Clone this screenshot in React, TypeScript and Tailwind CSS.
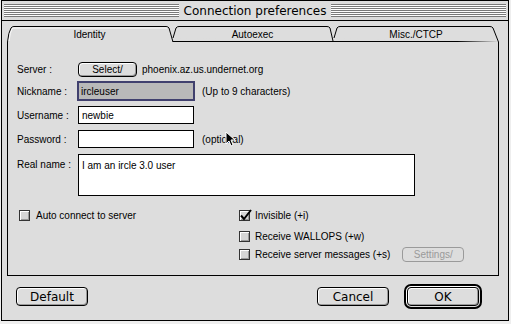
const geneva = { fontFamily: '"Liberation Sans", Arial, sans-serif' };
const chicago = { fontFamily: '"DejaVu Sans", Verdana, sans-serif' };

function Stripes({ className = "" }: { className?: string }) {
  return (
    <div
      className={`h-[13px] bg-[repeating-linear-gradient(to_bottom,#7a7a7a_0px,#7a7a7a_1px,#ffffff_1px,#ffffff_2px)] ${className}`}
    />
  );
}

function Button({ label, w, disabled = false }: { label: string; w: string; disabled?: boolean }) {
  return (
    <div
      className={`${w} h-full flex items-center justify-center rounded-[4px] border bg-[#dddddd] ${
        disabled
          ? "border-[#9a9a9a] text-[#9a9a9a]"
          : "border-black text-black shadow-[inset_1px_1px_0_#ffffff,inset_-1px_-1px_0_#999999]"
      }`}
    >
      {label}
    </div>
  );
}

function Checkbox({ checked = false }: { checked?: boolean }) {
  return (
    <div className="relative w-[11px] h-[11px] shrink-0 border border-[#333] bg-[#d6d6d6] shadow-[inset_1px_1px_0_#ffffff,inset_-1px_-1px_0_#999999]">
      {checked && (
        <svg className="absolute -left-px -top-[2px]" width="14" height="13" viewBox="0 0 14 13">
          <path d="M2 6.5 L5 10 L12 1" fill="none" stroke="#000" strokeWidth="2" />
        </svg>
      )}
    </div>
  );
}

function Field({ value, w = "w-[116px]" }: { value: string; w?: string }) {
  return (
    <div className={`${w} h-[18px] border border-black bg-white flex items-center pl-[3px] text-[10px]`}>
      {value}
    </div>
  );
}

function Tabs() {
  return (
    <div className="relative h-[16px] ml-[5px] w-[492px]">
      <svg className="absolute inset-0" width="492" height="16" viewBox="0 0 492 16">
        <g fill="none" stroke="#000" strokeWidth="1">
          {/* inactive tabs */}
          <path d="M165 15.5 H491" />
          <path d="M166 12 L169 2 Q170 0.5 172 0.5 H320 Q322 0.5 323 2 L326 15" fill="#dddddd" />
          <path d="M327 12 L330 2 Q331 0.5 333 0.5 H483 Q485 0.5 486 2 L491.5 16" fill="#dddddd" />
          {/* active tab */}
          <path d="M0.5 16 Q1.5 6 4 2 Q5 0.5 7 0.5 H159 Q161 0.5 162 2 L166 16" fill="#dddddd" />
          <path d="M166 15.5 H491" stroke="#000" strokeDasharray="0" opacity="0" />
        </g>
        <path d="M2 15 Q3 6 5 3 L6 2 H160" fill="none" stroke="#ffffff" strokeWidth="1" opacity="0.9" />
      </svg>
      <div className="relative flex h-full text-[10px] text-black" style={geneva}>
        <div className="w-[165px] flex items-center justify-center pt-[1px]">Identity</div>
        <div className="w-[161px] flex items-center justify-center pt-[1px]">Autoexec</div>
        <div className="w-[166px] flex items-center justify-center pt-[1px]">Misc./CTCP</div>
      </div>
    </div>
  );
}

export default function App() {
  return (
    <div className="relative w-[511px] h-[324px] bg-[#eeeeee] overflow-hidden text-black">
      <div className="ml-px w-[508px] h-[321px] border border-black bg-[#dddddd] flex flex-col">
        {/* title bar */}
        <div className="h-[20px] shrink-0 flex items-center px-[2px] gap-[5px] border-b border-black">
          <Stripes className="flex-1" />
          <span className="text-[12px] leading-none" style={chicago}>
            Connection preferences
          </span>
          <Stripes className="flex-1" />
        </div>

        <div className="mt-[5px]">
          <Tabs />
        </div>

        {/* panel */}
        <div
          className="ml-[5px] w-[492px] h-[234px] border-l border-r border-b border-black pl-[9px] pt-[20px] text-[10px] flex flex-col"
          style={geneva}
        >
          <div className="h-[15px] flex items-center">
            <span className="w-[61px]">Server :</span>
            <div className="h-[15px]" style={chicago}>
              <div className="h-full text-[10px]" style={geneva}>
                <Button label="Select/" w="w-[59px]" />
              </div>
            </div>
            <span className="ml-[5px]">phoenix.az.us.undernet.org</span>
          </div>

          <div className="mt-[4px] h-[20px] flex items-center">
            <span className="w-[60px]">Nickname :</span>
            <div className="w-[118px] h-[20px] border-2 border-[#40406e] bg-[#b9b9b9] flex items-center pl-[2px]">
              ircleuser
            </div>
            <span className="ml-[7px]">(Up to 9 characters)</span>
          </div>

          <div className="mt-[5px] h-[18px] flex items-center">
            <span className="w-[61px]">Username :</span>
            <Field value="newbie" />
          </div>

          <div className="mt-[6px] h-[18px] flex items-center">
            <span className="w-[61px]">Password :</span>
            <Field value="" />
            <span className="ml-[8px]">(optional)</span>
          </div>

          <div className="mt-[6px] h-[42px] flex items-start">
            <span className="w-[61px] pt-[3px]">Real name :</span>
            <div className="w-[337px] h-[42px] border border-black bg-white pl-[3px] pt-[3px]">
              I am an ircle 3.0 user
            </div>
          </div>

          <div className="mt-[13px] flex">
            <div className="w-[222px] pl-[2px] h-[12px] flex items-center gap-[6px]">
              <Checkbox />
              <span>Auto connect to server</span>
            </div>
            <div className="flex flex-col">
              <div className="h-[12px] flex items-center gap-[5px]">
                <Checkbox checked />
                <span>Invisible (+i)</span>
              </div>
              <div className="mt-[9px] h-[12px] flex items-center gap-[5px]">
                <Checkbox />
                <span>Receive WALLOPS (+w)</span>
              </div>
              <div className="mt-[5px] h-[15px] flex items-center">
                <Checkbox />
                <span className="ml-[5px]">Receive server messages (+s)</span>
                <div className="ml-[12px] h-[15px]">
                  <Button label="Settings/" w="w-[62px]" disabled />
                </div>
              </div>
            </div>
          </div>
        </div>

        {/* bottom buttons */}
        <div className="mt-[8px] h-[25px] flex items-center pl-[14px] pr-[26px] text-[12px]" style={chicago}>
          <div className="h-[19px]">
            <Button label="Default" w="w-[72px]" />
          </div>
          <div className="ml-auto h-[19px]">
            <Button label="Cancel" w="w-[72px]" />
          </div>
          <div className="ml-[15px] h-[25px] w-[78px] rounded-[7px] border-2 border-black p-px bg-[#dddddd] shadow-[inset_1px_1px_0_#ffffff]">
            <Button label="OK" w="w-full" />
          </div>
        </div>
      </div>

      {/* mouse pointer */}
      <svg className="absolute left-[225px] top-[131px]" width="11" height="17" viewBox="0 0 11 17">
        <path d="M1 1 L1 13 L4 10 L6 15 L8 14 L6 9 L10 9 Z" fill="#000" stroke="#fff" strokeWidth="1" />
      </svg>
    </div>
  );
}
